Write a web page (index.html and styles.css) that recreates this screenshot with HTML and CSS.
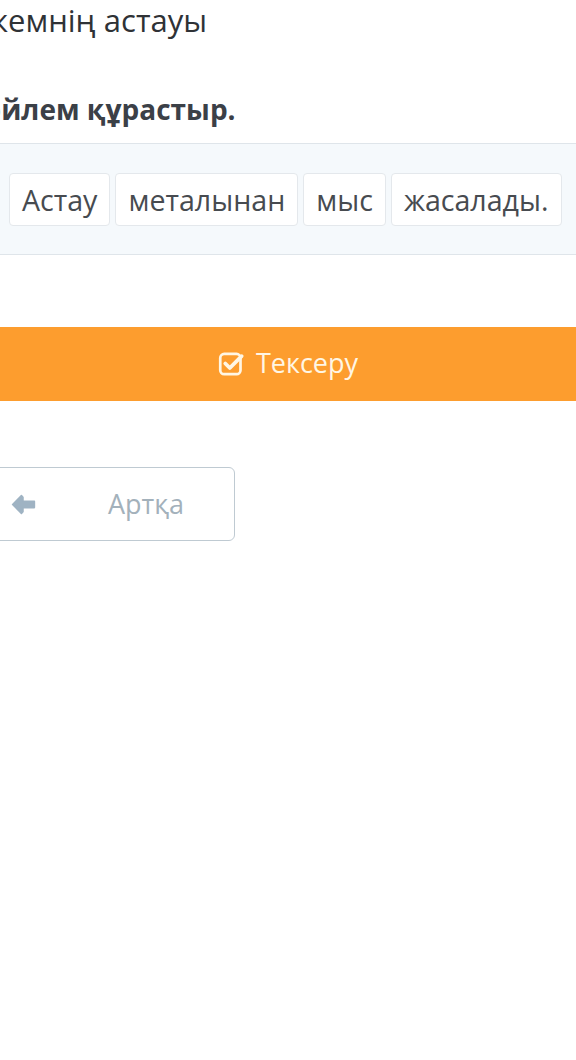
FILE: index.html
```html
<!DOCTYPE html>
<html lang="kk">
<head>
  <meta charset="UTF-8" />
  <meta name="viewport" content="width=device-width, initial-scale=1.0"/>
  <title>Сөйлем құрастыр</title>
  <link rel="stylesheet" href="styles.css">
</head>
<body>
  <div class="page">
    <h2 class="question-title">кемнің астауы</h2>
    <p class="instruction">Сөйлем құрастыр.</p>

    <div class="word-panel">
      <span class="word">Астау</span>
      <span class="word">металынан</span>
      <span class="word">мыс</span>
      <span class="word">жасалады.</span>
    </div>

    <button class="check-btn">
      <svg class="check-icon" viewBox="0 0 24 24" width="27" height="27">
        <rect x="2" y="3.5" width="18" height="18" rx="3.5" fill="none" stroke="currentColor" stroke-width="2.4"/>
        <path d="M6.5 12 L10.5 16 L21 5.5" fill="none" stroke="currentColor" stroke-width="3.4" stroke-linecap="round" stroke-linejoin="round"/>
      </svg>
      <span>Тексеру</span>
    </button>

    <button class="back-btn">
      <svg class="back-icon" viewBox="0 0 26 22" width="27" height="23">
        <path d="M11 2.5 L2.5 11 L11 19.5 L12.5 18 L12.5 14 L23.5 14 L23.5 8 L12.5 8 L12.5 4 Z" fill="currentColor" stroke="currentColor" stroke-width="1.5" stroke-linejoin="round"/>
      </svg>
      <span class="back-label">Артқа</span>
    </button>
  </div>
</body>
</html>
```

FILE: styles.css
```css
body {
  margin: 0;
  font-family: 'Open Sans', 'Noto Sans', sans-serif;
  background: #fff;
  color: #333;
  overflow: hidden;
}
.page {
  margin-left: -35px;
}
.question-title {
  margin: 0;
  padding-left: 27px;
  font-size: 31px;
  font-weight: 400;
  line-height: 40px;
  color: #2f3236;
}
.instruction {
  margin: 50px 0 15px;
  padding-left: 1px;
  font-size: 28px;
  font-weight: 700;
  line-height: 38px;
  color: #3b4047;
}
.word-panel {
  display: flex;
  gap: 5px;
  padding: 29px 0 28px 44px;
  background: #f5f9fc;
  border-top: 1px solid #dfe5ea;
  border-bottom: 1px solid #dfe5ea;
}
.word {
  padding: 6px 12px;
  font-size: 28.6px;
  line-height: 39px;
  color: #474b50;
  background: #fff;
  border: 1px solid #e4e8ec;
  border-radius: 4px;
}
.check-btn {
  display: flex;
  align-items: center;
  justify-content: center;
  gap: 11px;
  width: 100%;
  margin-top: 72px;
  padding: 17px 0 19px 35px;
  font-family: inherit;
  font-size: 27px;
  line-height: 38px;
  color: #fff6e4;
  background: #fd9d2e;
  border: none;
}
.check-icon {
  margin-top: 1px;
}
.back-btn {
  display: flex;
  align-items: center;
  width: 270px;
  margin-top: 66px;
  padding: 17px 0 17px 44px;
  font-family: inherit;
  font-size: 27px;
  line-height: 38px;
  color: #a3b1bb;
  background: #fff;
  border: 1px solid #bfcad2;
  border-radius: 6px;
}
.back-icon {
  color: #9fb3c3;
}
.back-label {
  margin-left: 71px;
}
```
